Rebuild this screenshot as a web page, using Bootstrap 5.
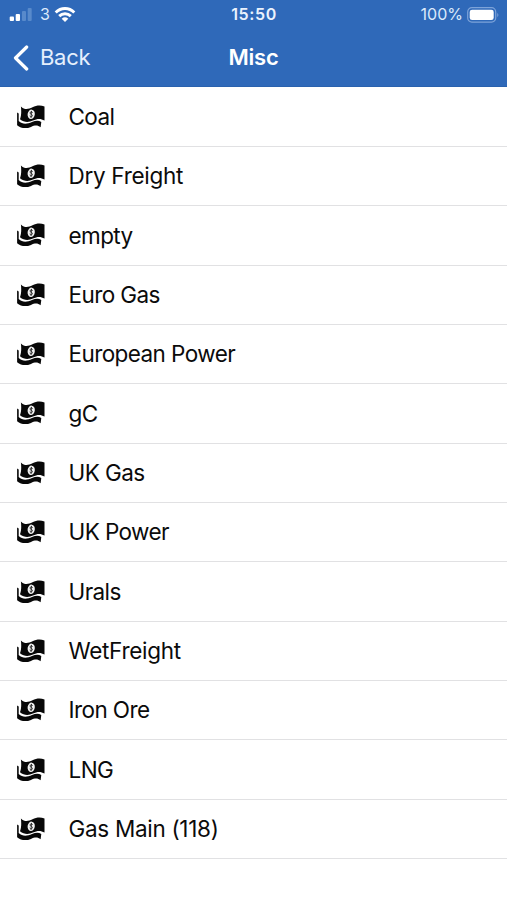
<!DOCTYPE html>
<html lang="en">
<head>
<meta charset="utf-8">
<meta name="viewport" content="width=device-width, initial-scale=1">
<title>Misc</title>
<link href="https://cdn.jsdelivr.net/npm/bootstrap@5.3.0/dist/css/bootstrap.min.css" rel="stylesheet">
<style>
  body { font-family: Inter, "Liberation Sans", sans-serif; color: #0b0b0b; background: #fff; }
  .top-area { background: #2f69b9; height: 87px; border-bottom: 1px solid #2a62ae; color: #fff; }
  .status-row { height: 29px; padding: 0 8px 0 9px; font-size: 16px; line-height: 29px; color: #dce9fb; }
  .status-row .clock { color: #eaf2fd; letter-spacing: .6px; }
  .status-row .power { letter-spacing: 0; }
  .title-row { height: 57px; padding: 0 13px; line-height: 57px; font-size: 22px; }
  .back-link { color: #e6f0fd; letter-spacing: -.3px; gap: 10px; }
  .page-title { font-size: 22px; line-height: 57px; letter-spacing: -.2px; }
  .item-list { --bs-list-group-color: #0b0b0b; --bs-list-group-border-color: #e1e1e3; padding-top: .6px; }
  .item-row { height: 59.35px; padding: 0 17px 0 16px; font-size: 22.5px; letter-spacing: -.58px; gap: 22.5px; }
  .item-list > .item-row.list-group-item { border-width: 0 0 1px; }
  .item-row.roomy { letter-spacing: -.3px; }
</style>
</head>
<body>
<svg class="d-none" xmlns="http://www.w3.org/2000/svg">
  <symbol id="cash" viewBox="0 0 30 24">
    <path fill="#080808" d="M4.900 1.500C8.500 4.900 12 4.600 16.500 2.300C20.500 .2 24.500 -.1 28.500 1.500V15.600C24.500 13.200 21 13.700 17 15.600C12.500 17.600 8 17.500 4 14.300C5.300 11 5.500 6.500 4.900 1.500Z"/>
    <path fill="#080808" d="M1.100 7.500L2.700 8.400V16.100C6.500 19.600 11 19.200 16 17.100C19.500 15.700 22.500 15.200 25.300 17.100L24.600 22.200C21.500 19.800 18.500 20.300 15 21.900C10 23.900 5 23.500 1.100 20.200Z"/>
    <ellipse cx="15.200" cy="9.300" rx="3.600" ry="4.700" fill="#f2f2f2" transform="rotate(8 15.200 9.300)"/>
    <path fill="none" stroke="#222" stroke-width=".9" d="M16.700 7.600C16 6.500 14 6.700 14 8C14.100 9.500 16.500 9 16.400 10.700C16.300 12 14.500 12.100 13.700 11M15.500 5.900L15 12.900"/>
  </symbol>
</svg>

<header class="top-area">
  <div class="status-row row g-0">
    <div class="col d-flex align-items-center">
      <svg width="23" height="13" viewBox="0 0 23 13" aria-hidden="true">
        <rect x=".7" y="8.500" width="4.300" height="4.500" rx="1" fill="#fff"/>
        <rect x="6.700" y="6" width="4.300" height="7" rx="1" fill="#fff"/>
        <rect x="13" y="3" width="4" height="10" rx="1" fill="#588acb"/>
        <rect x="18.700" y="0" width="4" height="13" rx="1" fill="#588acb"/>
      </svg>
      <span class="ms-1 ps-1 pe-1">3</span>
      <svg width="22" height="16" viewBox="1.200 .8 21.600 16" aria-hidden="true">
        <path d="M2.700 6.300C8 .9 16 .9 21.300 6.300M6.200 9.900C9.500 6.700 14.500 6.700 17.800 9.900" fill="none" stroke="#fff" stroke-width="2.900"/>
        <path d="M8.700 12.500Q12 9.600 15.300 12.500L12 15.900Z" fill="#fff"/>
      </svg>
    </div>
    <div class="col-auto clock fw-semibold">15:50</div>
    <div class="col d-flex align-items-center justify-content-end">
      <span class="power">100%</span>
      <svg class="ms-1" width="32" height="16" viewBox="0 0 32 16" aria-hidden="true">
        <rect x=".7" y=".7" width="28" height="14.400" rx="4.200" fill="none" stroke="#7da3d9" stroke-width="1.200"/>
        <rect x="2.700" y="2.700" width="24" height="10.400" rx="2.400" fill="#fff"/>
        <path d="M30.300 5.700Q32.500 8 30.300 10.200Z" fill="#7da3d9"/>
      </svg>
    </div>
  </div>
  <nav class="title-row row g-0" aria-label="Page">
    <div class="col">
      <a href="#" class="back-link d-flex align-items-center text-decoration-none">
        <svg width="17" height="26" viewBox="0 0 17 26" aria-hidden="true"><path d="M13.700 2L2.500 13L13.700 24" fill="none" stroke="#fff" stroke-width="3.200" stroke-linecap="round" stroke-linejoin="round"/></svg>
        <span>Back</span>
      </a>
    </div>
    <h1 class="page-title col-auto fw-semibold mb-0">Misc</h1>
    <div class="col"></div>
  </nav>
</header>

<main class="list-group list-group-flush item-list">
  <div class="list-group-item item-row d-flex align-items-center"><svg width="30" height="24"><use href="#cash"/></svg><span>Coal</span></div>
  <div class="list-group-item item-row roomy d-flex align-items-center"><svg width="30" height="24"><use href="#cash"/></svg><span>Dry Freight</span></div>
  <div class="list-group-item item-row d-flex align-items-center"><svg width="30" height="24"><use href="#cash"/></svg><span>empty</span></div>
  <div class="list-group-item item-row d-flex align-items-center"><svg width="30" height="24"><use href="#cash"/></svg><span>Euro Gas</span></div>
  <div class="list-group-item item-row d-flex align-items-center"><svg width="30" height="24"><use href="#cash"/></svg><span>European Power</span></div>
  <div class="list-group-item item-row d-flex align-items-center"><svg width="30" height="24"><use href="#cash"/></svg><span>gC</span></div>
  <div class="list-group-item item-row d-flex align-items-center"><svg width="30" height="24"><use href="#cash"/></svg><span>UK Gas</span></div>
  <div class="list-group-item item-row d-flex align-items-center"><svg width="30" height="24"><use href="#cash"/></svg><span>UK Power</span></div>
  <div class="list-group-item item-row d-flex align-items-center"><svg width="30" height="24"><use href="#cash"/></svg><span>Urals</span></div>
  <div class="list-group-item item-row roomy d-flex align-items-center"><svg width="30" height="24"><use href="#cash"/></svg><span>WetFreight</span></div>
  <div class="list-group-item item-row d-flex align-items-center"><svg width="30" height="24"><use href="#cash"/></svg><span>Iron Ore</span></div>
  <div class="list-group-item item-row d-flex align-items-center"><svg width="30" height="24"><use href="#cash"/></svg><span>LNG</span></div>
  <div class="list-group-item item-row roomy d-flex align-items-center"><svg width="30" height="24"><use href="#cash"/></svg><span>Gas Main (118)</span></div>
</main>
</body>
</html>
